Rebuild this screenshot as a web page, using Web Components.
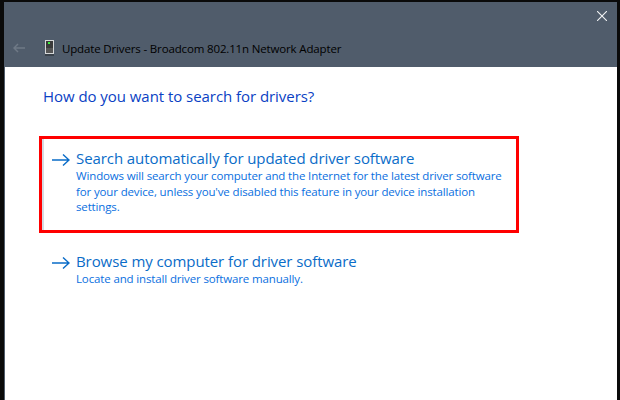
<!DOCTYPE html>
<html>
<head>
<meta charset="utf-8">
<title>Update Drivers</title>
<style>
  html, body { margin: 0; height: 100%; background: #0a0a0a; overflow: hidden; }
  body { font-family: "Open Sans", "Noto Sans", sans-serif; }
</style>
</head>
<body>
<wizard-window>
  <wizard-header title-text="Update Drivers - Broadcom 802.11n Network Adapter"></wizard-header>
  <wizard-page heading="How do you want to search for drivers?">
    <wizard-option selected label="Search automatically for updated driver software">
      Windows will search your computer and the Internet for the latest driver software<br>for your device, unless you've disabled this feature in your device installation<br>settings.
    </wizard-option>
    <wizard-option label="Browse my computer for driver software">
      Locate and install driver software manually.
    </wizard-option>
  </wizard-page>
</wizard-window>

<script>
class WizardWindow extends HTMLElement {
  constructor() {
    super();
    this.attachShadow({ mode: 'open' });
  }
  connectedCallback() {
    this.shadowRoot.innerHTML = `
      <style>
        :host {
          display: flex;
          flex-direction: column;
          box-sizing: border-box;
          height: 400px;
          margin: 2px 3px 0 4px;
          background: #fff;
          border-left: 1px solid #505c6b;
        }
      </style>
      <slot></slot>
    `;
  }
}

class WizardHeader extends HTMLElement {
  constructor() {
    super();
    this.attachShadow({ mode: 'open' });
  }
  connectedCallback() {
    const title = this.getAttribute('title-text');
    this.shadowRoot.innerHTML = `
      <style>
        :host {
          display: flex;
          flex-direction: column;
          height: 65px;
          background: #505c6b;
          color: #000;
        }
        .close {
          display: flex;
          justify-content: flex-end;
          padding: 9px 10px 0 0;
          height: 21px;
        }
        .row {
          display: flex;
          align-items: center;
          margin-top: 4px;
          height: 24px;
          padding-left: 8px;
        }
        .back { margin-right: 20px; }
        .device { margin-right: 8px; }
        .title {
          font-size: 11.5px;
          letter-spacing: -0.15px;
          white-space: nowrap;
        }
        svg { display: block; }
      </style>
      <div class="close">
        <svg width="10" height="10" viewBox="0 0 10 10">
          <path d="M0 0L10 10M10 0L0 10" stroke="#f2f3f5" stroke-width="1.1" fill="none"/>
        </svg>
      </div>
      <div class="row">
        <svg class="back" width="12" height="10" viewBox="0 0 12 10">
          <path d="M12 5H1M5 1L1 5L5 9" stroke="#6f7986" stroke-width="1.5" fill="none"/>
        </svg>
        <svg class="device" width="9" height="16" viewBox="0 0 9 16">
          <rect x="0.5" y="0.5" width="8" height="13" fill="#3a3a3a" stroke="#d5d7d8"/>
          <rect x="1" y="8" width="7" height="5" fill="#555"/>
          <rect x="3" y="2" width="2" height="2" fill="#3bf03b"/>
          <rect x="0" y="14.5" width="9" height="1" fill="#22262b"/>
        </svg>
        <span class="title">${title}</span>
      </div>
    `;
  }
}

class WizardPage extends HTMLElement {
  constructor() {
    super();
    this.attachShadow({ mode: 'open' });
  }
  connectedCallback() {
    this.shadowRoot.innerHTML = `
      <style>
        :host {
          display: block;
          padding: 19px 0 0 34px;
        }
        h1 {
          margin: 0 0 30px 4px;
          font-size: 15px;
          line-height: 20px;
          font-weight: 400;
          color: #0a3fc4;
          letter-spacing: -0.05px;
        }
        .options {
          display: flex;
          flex-direction: column;
          gap: 6px;
          width: 480px;
        }
      </style>
      <h1>${this.getAttribute('heading')}</h1>
      <div class="options"><slot></slot></div>
    `;
  }
}

class WizardOption extends HTMLElement {
  constructor() {
    super();
    this.attachShadow({ mode: 'open' });
  }
  connectedCallback() {
    this.shadowRoot.innerHTML = `
      <style>
        :host {
          display: flex;
          gap: 6px;
          box-sizing: border-box;
          padding: 9px 0 15.5px 10px;
          border: 3px solid transparent;
          color: #0a6fe0;
        }
        :host([selected]) {
          border-color: #ff0000;
          box-shadow: inset 2px 0 0 #d5dbe2;
        }
        svg { flex: none; margin-top: 6px; display: block; }
        .label {
          font-size: 15px;
          line-height: 20px;
          letter-spacing: -0.08px;
          white-space: nowrap;
          color: #0a6cc8;
        }
        .desc {
          font-size: 11.5px;
          line-height: 15.5px;
          letter-spacing: -0.14px;
          white-space: nowrap;
        }
      </style>
      <svg width="18" height="12" viewBox="0 0 18 12">
        <path d="M0 6H17M11 0.5L17 6L11 11.5" stroke="#0a6cc8" stroke-width="1.4" fill="none"/>
      </svg>
      <div>
        <div class="label">${this.getAttribute('label')}</div>
        <div class="desc"><slot></slot></div>
      </div>
    `;
  }
}

customElements.define('wizard-window', WizardWindow);
customElements.define('wizard-header', WizardHeader);
customElements.define('wizard-page', WizardPage);
customElements.define('wizard-option', WizardOption);
</script>
</body>
</html>
